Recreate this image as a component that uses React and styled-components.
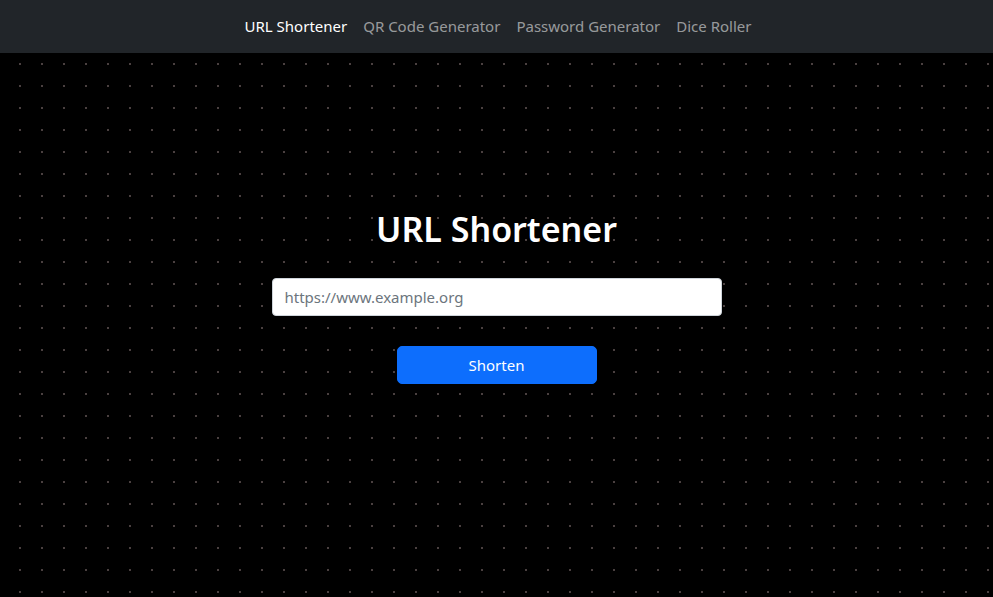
import React, { useState } from 'react';
import styled, { createGlobalStyle } from 'styled-components';

const GlobalStyle = createGlobalStyle`
  html, body {
    margin: 0;
    padding: 0;
    height: 100%;
  }

  body {
    background-color: #000;
    background-image: radial-gradient(circle, #4a4040 0.8px, transparent 1.2px);
    background-size: 22px 22px;
    background-position: 9px 9px;
    font-family: "Noto Sans", "Open Sans", sans-serif;
    color: #fff;
  }

  #root {
    min-height: 100%;
  }
`;

const Navbar = styled.nav`
  box-sizing: border-box;
  height: 53px;
  padding-bottom: 2px;
  background: #212529;
  display: flex;
  align-items: center;
  justify-content: center;
`;

const NavList = styled.ul`
  display: flex;
  list-style: none;
  margin: 0 0 0 3px;
  padding: 0;
`;

const NavLink = styled.a`
  display: block;
  padding: 8px 8px;
  font-size: 15px;
  color: ${props => (props.$active ? '#fff' : 'rgba(255, 255, 255, 0.55)')};
  text-decoration: none;
  cursor: pointer;

  &:hover {
    color: rgba(255, 255, 255, 0.75);
  }
`;

const Main = styled.main`
  display: flex;
  flex-direction: column;
  align-items: center;
  padding-top: 154px;
`;

const Title = styled.h1`
  margin: 0 0 27px 0;
  font-size: 34px;
  line-height: 44px;
  font-weight: 600;
  color: #fff;
`;

const UrlInput = styled.input`
  box-sizing: border-box;
  width: 450px;
  height: 38px;
  padding: 6px 12px;
  font-family: inherit;
  font-size: 15px;
  color: #212529;
  background: #fff;
  border: 1px solid #ced4da;
  border-radius: 4px;
  outline: none;

  &::placeholder {
    color: #6c757d;
  }
`;

const ShortenButton = styled.button`
  box-sizing: border-box;
  margin-top: 30px;
  width: 200px;
  height: 38px;
  font-family: inherit;
  font-size: 15px;
  color: #fff;
  background: #0d6efd;
  border: 1px solid #0d6efd;
  border-radius: 5px;
  cursor: pointer;

  &:hover {
    background: #0b5ed7;
  }
`;

const links = ['URL Shortener', 'QR Code Generator', 'Password Generator', 'Dice Roller'];

const App = () => {
  const [url, setUrl] = useState('');

  return (
    <>
      <GlobalStyle />
      <Navbar>
        <NavList>
          {links.map((label, i) => (
            <li key={label}>
              <NavLink $active={i === 0}>{label}</NavLink>
            </li>
          ))}
        </NavList>
      </Navbar>
      <Main>
        <Title>URL Shortener</Title>
        <UrlInput
          type="text"
          placeholder="https://www.example.org"
          value={url}
          onChange={(e) => setUrl(e.target.value)}
        />
        <ShortenButton>Shorten</ShortenButton>
      </Main>
    </>
  );
};

export default App;
